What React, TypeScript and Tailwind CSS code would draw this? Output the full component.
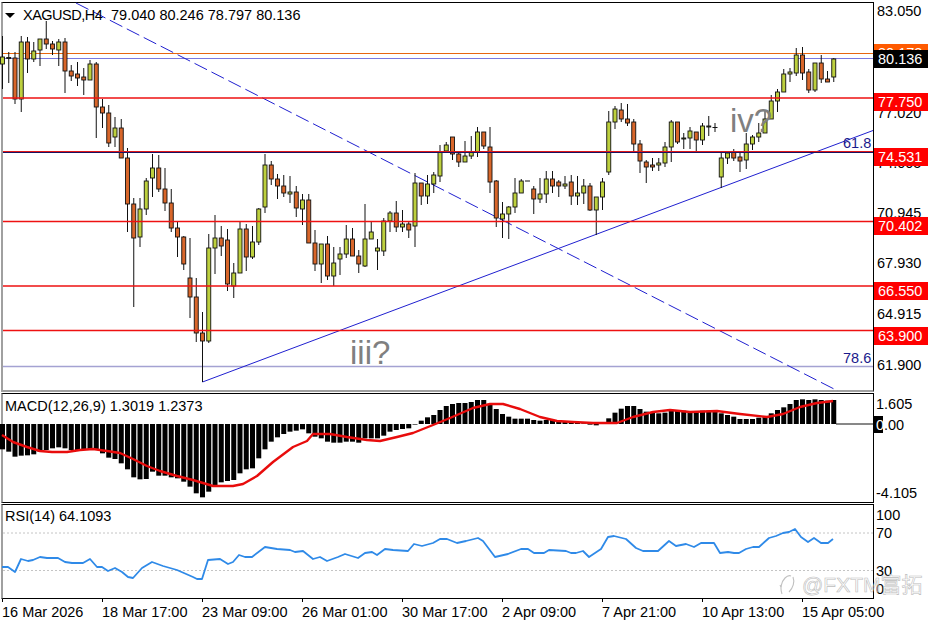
const sans = "font-['Liberation_Sans',Arial,sans-serif]"

// top, bottom, high, low, direction - all in page pixels
type Candle = [number, number, number, number, 'u' | 'd']

const candles: Candle[] = [
  [57, 64, 36, 89, 'u'], [57.5, 58.5, 52, 83, 'u'], [58, 99, 52, 104, 'd'], [42, 99, 36, 112, 'u'],
  [42, 59, 37, 73, 'd'], [51, 59, 42, 62, 'u'], [39, 50, 39, 66, 'u'], [39, 44, 21, 49, 'd'],
  [44, 49, 41, 55, 'd'], [42, 50, 39, 66, 'u'], [42, 71, 38, 93, 'd'], [71, 76, 65, 81, 'd'],
  [74, 78, 62, 86, 'd'], [77, 80, 68, 95, 'd'], [64, 80, 60, 80, 'u'], [64, 107, 62, 138, 'd'],
  [107, 113, 99, 128, 'd'], [113, 143, 105, 147, 'd'], [128, 137, 117, 147, 'u'], [128, 158, 119, 158, 'd'],
  [158, 204, 148, 232, 'd'], [204, 238, 198, 307, 'd'], [209, 237, 198, 247, 'u'], [181, 209, 178, 215, 'u'],
  [168, 178, 154, 197, 'u'], [168, 189, 155, 192, 'd'], [189, 203, 168, 211, 'd'], [203, 228, 189, 232, 'd'],
  [228, 237, 222, 257, 'd'], [237, 264, 236, 270, 'd'], [278, 297, 238, 318, 'd'], [297, 333, 278, 342, 'd'],
  [333, 341, 312, 382, 'd'], [248, 341, 234, 343, 'u'], [238, 248, 215, 274, 'u'], [238, 246, 226, 256, 'd'],
  [240, 284, 229, 291, 'd'], [273, 286, 263, 298, 'u'], [229, 273, 222, 273, 'u'], [229, 257, 224, 271, 'd'],
  [242, 257, 226, 259, 'u'], [209, 242, 208, 245, 'u'], [165, 207, 154, 213, 'u'], [165, 179, 161, 185, 'd'],
  [179, 186, 174, 199, 'd'], [186, 193, 175, 197, 'd'], [192, 194, 176, 203, 'u'], [192, 208, 186, 217, 'd'],
  [200, 209, 194, 225, 'u'], [200, 243, 194, 243, 'd'], [243, 264, 230, 271, 'd'], [244, 264, 244, 283, 'u'],
  [244, 276, 236, 280, 'd'], [263, 276, 247, 286, 'u'], [254, 259, 247, 275, 'u'], [239, 254, 225, 258, 'u'],
  [239, 256, 228, 256, 'd'], [256, 264, 250, 273, 'd'], [239, 266, 204, 267, 'u'], [232, 239, 222, 239, 'u'],
  [248, 251, 239, 270, 'u'], [221, 251, 218, 256, 'u'], [213, 221, 211, 232, 'u'], [213, 227, 201, 232, 'd'],
  [224, 227, 210, 232, 'u'], [224, 230, 221, 238, 'd'], [183, 226, 173, 247, 'u'], [183, 196, 183, 205, 'd'],
  [184, 196, 175, 204, 'u'], [175, 184, 172, 193, 'u'], [152, 176, 145, 182, 'u'], [145, 151, 142, 152, 'u'],
  [137, 154, 137, 160, 'd'], [154, 162, 152, 167, 'd'], [156, 162, 141, 162, 'u'], [152, 156, 136, 159, 'u'],
  [132, 152, 127, 157, 'u'], [132, 146, 132, 149, 'd'], [147, 182, 127, 193, 'd'], [181, 218, 180, 227, 'd'],
  [214, 219, 202, 238, 'u'], [207, 214, 206, 239, 'u'], [193, 207, 178, 213, 'u'], [181, 193, 179, 193, 'u'],
  [181, 181, 181, 181, 'u'], [189, 199, 186, 214, 'd'], [194, 199, 178, 203, 'u'], [179, 194, 171, 203, 'u'],
  [179, 186, 171, 193, 'd'], [182, 186, 180, 197, 'd'], [184, 186, 176, 189, 'u'], [182, 196, 175, 205, 'd'],
  [193, 196, 176, 205, 'u'], [186, 193, 179, 204, 'u'], [186, 210, 183, 211, 'd'], [197, 210, 197, 235, 'u'],
  [182, 197, 178, 210, 'u'], [122, 172, 111, 175, 'u'], [109, 122, 106, 129, 'u'], [110, 119, 103, 122, 'd'],
  [119, 123, 104, 126, 'd'], [122, 144, 119, 151, 'd'], [144, 161, 140, 173, 'd'], [162, 167, 160, 183, 'd'],
  [165, 167, 158, 171, 'd'], [163, 165, 158, 171, 'u'], [147, 163, 142, 167, 'u'], [122, 147, 120, 162, 'u'],
  [122, 142, 122, 144, 'd'], [138, 139, 133, 149, 'u'], [131, 138, 127, 149, 'u'], [132, 140, 132, 151, 'd'],
  [126, 140, 123, 145, 'u'], [126, 127, 116, 136, 'u'], [127.5, 127.5, 123, 132, 'u'], [158, 177, 153, 188, 'u'],
  [153, 158, 151, 164, 'u'], [152, 158, 149, 161, 'd'], [157, 161, 152, 172, 'd'], [144, 160, 133, 169, 'u'],
  [137, 144, 135, 150, 'u'], [133, 137, 123, 142, 'u'], [119, 133, 110, 133, 'u'], [101, 119, 95, 119, 'u'],
  [92, 101, 89, 112, 'u'], [74, 92, 69, 92, 'u'], [72, 74, 68, 82, 'u'], [55, 73, 48, 76, 'u'],
  [55, 73, 47, 80, 'd'], [72, 90, 69, 93, 'd'], [63, 90, 63, 92, 'u'], [63, 79, 55, 83, 'd'],
  [79, 82, 71, 82, 'd'], [59, 77, 58, 82, 'u'],
]

// MACD bar ends, in the zoomed units of the pane (baseline 102)
const macdBars = [
  178, 185, 200, 197, 196, 193, 185, 180, 175, 172, 175, 180, 182, 180, 178, 178, 190, 203, 207, 220,
  238, 262, 268, 267, 245, 257, 257, 262, 265, 275, 290, 310, 322, 305, 290, 277, 273, 270, 250, 238,
  235, 205, 178, 155, 142, 132, 125, 122, 118, 130, 140, 145, 155, 158, 158, 155, 155, 158, 145, 145,
  145, 137, 125, 120, 117, 115, 103, 92, 82, 75, 60, 48, 42, 39, 39, 36, 30, 30, 42, 57,
  72, 80, 86, 86, 86, 90, 92, 90, 90, 93, 95, 96, 99, 100, 104, 106, 100, 85, 68, 56,
  48, 48, 57, 65, 68, 70, 68, 62, 62, 62, 65, 65, 62, 62, 65, 70, 75, 80, 87, 87,
  87, 83, 80, 70, 60, 52, 42, 30, 28, 30, 28, 30, 32, 30,
]

const macdSignal = [
  [2, 435], [13, 442], [27, 447], [40, 451], [52, 452], [67, 452], [80, 450], [93, 449], [107, 451], [120, 453],
  [133, 459], [147, 466], [160, 471], [177, 476], [193, 480], [213, 486], [233, 486], [243, 484], [257, 476],
  [273, 462], [293, 447], [307, 441], [313, 434], [330, 434], [347, 437], [367, 440], [380, 441], [397, 437],
  [413, 433], [433, 425], [450, 418], [473, 408], [490, 404], [503, 404], [520, 409], [540, 417], [557, 421],
  [573, 422], [593, 423], [617, 423], [633, 417], [653, 412], [670, 410], [690, 412], [717, 411], [740, 414],
  [767, 417], [783, 414], [800, 407], [817, 403], [833, 401],
]

const rsiLine = [
  [2, 567], [8, 567], [15, 572], [21, 559], [28, 561], [33, 560], [40, 557], [47, 558], [58, 558], [65, 562],
  [72, 563], [83, 563], [90, 559], [97, 567], [102, 567], [108, 571], [115, 568], [122, 572], [128, 577], [133, 578],
  [142, 568], [152, 562], [163, 566], [177, 570], [193, 577], [197, 579], [202, 579], [208, 560], [220, 559], [228, 564],
  [233, 562], [239, 555], [245, 557], [252, 557], [265, 547], [277, 549], [290, 550], [295, 552], [303, 551], [313, 559],
  [320, 557], [327, 561], [338, 557], [345, 554], [358, 558], [365, 553], [372, 552], [377, 555], [385, 549], [393, 550],
  [408, 551], [414, 544], [422, 546], [433, 543], [440, 539], [447, 539], [457, 543], [466, 541], [478, 538], [483, 541],
  [495, 557], [508, 554], [521, 549], [528, 549], [534, 553], [544, 553], [549, 550], [566, 551], [571, 553], [576, 553],
  [583, 551], [589, 557], [601, 549], [608, 537], [614, 536], [626, 539], [636, 548], [643, 551], [658, 551], [669, 541],
  [676, 546], [686, 544], [694, 547], [701, 543], [714, 543], [720, 553], [728, 552], [734, 553], [739, 553], [746, 549],
  [753, 547], [759, 547], [769, 538], [776, 536], [783, 533], [789, 532], [795, 529], [801, 537], [808, 542], [814, 538],
  [821, 543], [828, 543], [833, 539],
]

const axisLabels = [
  { y: 11, text: '83.050' }, { y: 113, text: '77.020' }, { y: 163, text: '74.005' }, { y: 213, text: '70.945' },
  { y: 263, text: '67.930' }, { y: 314, text: '64.915' }, { y: 365, text: '61.900' },
]

const priceTags = [
  { y: 53, text: '80.173', fill: '#ff5a00' }, { y: 59, text: '80.136', fill: '#000' },
  { y: 102, text: '77.750', fill: '#ff0000' }, { y: 157, text: '74.531', fill: '#ff0000' },
  { y: 226, text: '70.402', fill: '#ff0000' }, { y: 291, text: '66.550', fill: '#ff0000' },
  { y: 336, text: '63.900', fill: '#ff0000' },
]

const times = [
  '16 Mar 2026', '18 Mar 17:00', '23 Mar 09:00', '26 Mar 01:00', '30 Mar 17:00',
  '2 Apr 09:00', '7 Apr 21:00', '10 Apr 13:00', '15 Apr 05:00',
]

const barX = (i: number) => 2.5 + 6.25 * i
const toPoints = (pts: number[][]) => pts.map((p) => p.join(',')).join(' ')

const MainChart = () => (
  <svg width="871" height="387" viewBox="3 3 871 387" className="block overflow-visible">
    <line x1="3" x2="873" y1="53.5" y2="53.5" stroke="#e8660f" strokeWidth="1.2" />
    <line x1="3" x2="873" y1="58.5" y2="58.5" stroke="#7a78e0" />
    <line x1="3" x2="873" y1="366.5" y2="366.5" stroke="#a4a2d2" strokeWidth="1.6" />
    <line x1="76" y1="3" x2="838" y2="391" stroke="#2020d0" strokeDasharray="14 5" />
    <line x1="202.5" y1="382" x2="873" y2="130.5" stroke="#2020d0" />
    {candles.map(([top, bottom, high, low, dir], i) => {
      const x = barX(i)
      return (
        <g key={i}>
          <line x1={x} x2={x} y1={high} y2={low} stroke="#111" />
          {top === bottom ? (
            <line x1={x - 2.5} x2={x + 2.5} y1={top} y2={top} stroke="#111" />
          ) : (
            <rect
              x={x - 2}
              y={top}
              width="4"
              height={bottom - top}
              fill={dir === 'u' ? '#bdd03e' : '#d8662a'}
              stroke="#111"
              strokeWidth="0.9"
            />
          )}
        </g>
      )
    })}
    {[98, 221.5, 286, 330.5].map((y) => (
      <line key={y} x1="3" x2="873" y1={y} y2={y} stroke="#ee1111" strokeWidth="1.6" />
    ))}
    <line x1="3" x2="873" y1="151.8" y2="151.8" stroke="#e01818" strokeWidth="1.6" />
    <line x1="3" x2="873" y1="152.5" y2="152.5" stroke="#1c1060" />
    <text x="730" y="132" fontSize="33" fill="#808080">iv?</text>
    <text x="350" y="364" fontSize="33" fill="#808080">iii?</text>
    <text x="843" y="148" fill="#1a1a8c">61.8</text>
    <text x="843" y="363" fill="#1a1a8c">78.6</text>
  </svg>
)

const MacdChart = () => (
  <svg width="871" height="108" viewBox="3 394 871 108" className="block overflow-visible">
    <line x1="836" x2="873" y1="424" y2="424" stroke="#111" />
    {macdBars.map((v, i) => {
      const end = 390 + v / 3
      return (
        <rect key={i} x={barX(i) - 2.5} y={Math.min(424, end)} width="5" height={Math.max(Math.abs(end - 424), 0.6)} fill="#000" />
      )
    })}
    <polyline points={toPoints(macdSignal)} fill="none" stroke="#e80c0c" strokeWidth="2.4" strokeLinejoin="round" />
  </svg>
)

const RsiChart = () => (
  <svg width="871" height="93" viewBox="3 505 871 93" className="block overflow-visible">
    <line x1="3" x2="873" y1="533" y2="533" stroke="#c4c4c4" strokeDasharray="2 2" />
    <line x1="3" x2="873" y1="570.5" y2="570.5" stroke="#c4c4c4" strokeDasharray="2 2" />
    <polyline points={toPoints(rsiLine)} fill="none" stroke="#2f8ae8" strokeWidth="1.8" strokeLinejoin="round" />
  </svg>
)

const PriceAxis = () => (
  <svg width="62" height="390" viewBox="874 2 62 390" className="block">
    {axisLabels.map((l) => (
      <text key={l.text} x="877" y={l.y + 5}>{l.text}</text>
    ))}
    {priceTags.map((t) => (
      <g key={t.text}>
        <rect x="874" y={t.y - 9} width="54" height="18" fill={t.fill} />
        <text x="878" y={t.y + 5} fill="#fff">{t.text}</text>
      </g>
    ))}
  </svg>
)

const MacdAxis = () => (
  <svg width="62" height="110" viewBox="874 393 62 110" className="block">
    <text x="876" y="409">1.605</text>
    <rect x="874" y="416" width="9" height="17" fill="#000" />
    <text x="876" y="430" fill="#fff">0</text>
    <text x="884" y="430">.00</text>
    <text x="876" y="498">-4.105</text>
  </svg>
)

const RsiAxis = () => (
  <svg width="62" height="95" viewBox="874 504 62 95" className="block">
    <text x="876" y="520">100</text>
    <text x="876" y="538">70</text>
    <text x="876" y="576">30</text>
    <text x="876" y="594">0</text>
  </svg>
)

const Watermark = () => (
  <div className="absolute left-[779px] top-[574px] flex items-center gap-[5px] text-[21px] leading-[20px] text-white/30 [-webkit-text-stroke:0.6px_#bcbcbc]">
    <svg width="18" height="22" viewBox="0 0 18 22" fill="none" stroke="#c0c0c0" strokeWidth="1.1">
      <path d="M3 20C1 15 2 8 6 4c2-2 4-3 6-2" />
      <path d="M14 3c2 5 0 11-4 15" />
      <path d="M1 11l1 2" />
    </svg>
    <span className="font-['Liberation_Sans','Noto_Sans_CJK_SC',sans-serif]">@FXTM富拓</span>
  </div>
)

export default function App() {
  return (
    <div className={`relative h-[624px] w-[936px] overflow-hidden bg-white pt-[2px] text-[14.5px] text-black ${sans}`}>
      <div className="flex h-[390px]">
        <div className="relative ml-px h-full w-[873px] border-b-2 border-l-2 border-r border-t border-b-[#a0a0a0] border-l-[#a0a0a0] border-r-black border-t-black">
          <MainChart />
          <div className="absolute left-[2px] top-[2px] flex items-center gap-2 leading-5">
            <span className="h-0 w-0 border-x-[5px] border-t-[5px] border-x-transparent border-t-black" />
            <span className="w-[80px] tracking-[-0.5px]">XAGUSD,H4</span>
            <span>79.040 80.246 78.797 80.136</span>
          </div>
        </div>
        <PriceAxis />
      </div>

      <div className="mt-px flex h-[110px]">
        <div className="ml-px w-[873px] border-b border-l-2 border-r border-t border-b-black border-l-[#a0a0a0] border-r-black border-t-black">
          <div className="relative">
            <MacdChart />
            <span className="absolute left-[2px] top-[2px] leading-5">MACD(12,26,9) 1.3019 1.2373</span>
          </div>
        </div>
        <MacdAxis />
      </div>

      <div className="mt-px flex h-[95px]">
        <div className="ml-px w-[873px] border-b border-l-2 border-r border-t border-b-black border-l-[#a0a0a0] border-r-black border-t-black">
          <div className="relative">
            <RsiChart />
            <span className="absolute left-[2px] top-[1px] leading-5">RSI(14) 64.1093</span>
          </div>
        </div>
        <RsiAxis />
      </div>

      <div className="flex pl-[2px]">
        {times.map((t) => (
          <div key={t} className="flex w-[100px] flex-col leading-5">
            <span className="h-[3px] w-px bg-black" />
            {t}
          </div>
        ))}
      </div>

      <Watermark />
    </div>
  )
}
